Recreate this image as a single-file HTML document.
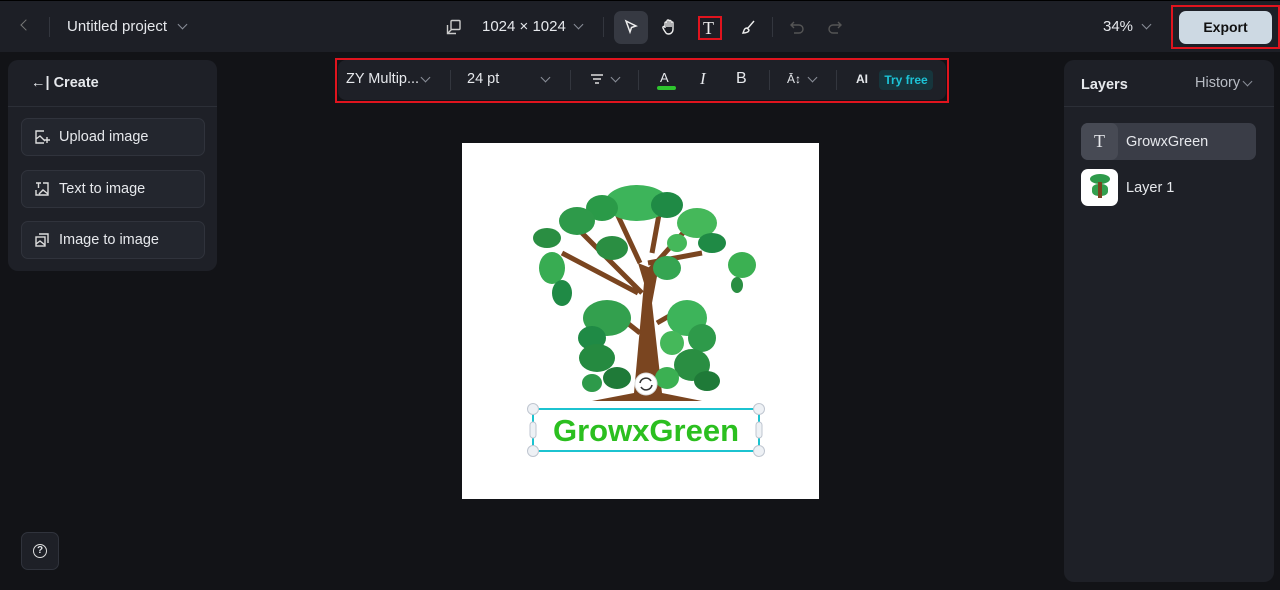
<!DOCTYPE html>
<html><head><meta charset="utf-8"><style>
*{box-sizing:border-box;margin:0;padding:0}
body{width:1280px;height:590px;background:#121317;font-family:"Liberation Sans",sans-serif;color:#e6e8ec;position:relative;overflow:hidden}
.top{position:absolute;left:0;top:0;width:1280px;height:52px;background:#1d1f26;border-top:1px solid #000}
.abs{position:absolute}
.panel{position:absolute;background:#1e2027;border-radius:10px}
.btn{position:absolute;left:21px;width:184px;height:38px;border:1px solid #30333c;background:#23262e;border-radius:7px;font-size:14.5px;line-height:36px;padding-left:37px}
.btn svg{position:absolute;left:12px;top:10px}
.red{position:absolute;border:2px solid #e0141e}
.chev{display:inline-block;width:7px;height:7px;border-right:1.3px solid #8a8e98;border-bottom:1.3px solid #8a8e98;transform:rotate(45deg);position:absolute}
</style></head><body>
<div class="top">
 <div class="abs" style="left:22px;top:20px;width:8px;height:8px;border-left:1.5px solid #777;border-bottom:1.5px solid #777;transform:rotate(45deg)"></div>
 <div class="abs" style="left:49px;top:16px;width:1px;height:20px;background:#33363e"></div>
 <div class="abs" style="left:67px;top:17px;font-size:15px">Untitled project</div>
 <span class="chev" style="left:179px;top:20px"></span>
 <svg class="abs" style="left:446px;top:18px" width="16" height="16" viewBox="0 0 16 16" fill="none" stroke="#ccc" stroke-width="1.4"><rect x="5" y="1.5" width="9" height="9" rx="1"/><path d="M1.5 6v8.5H10M1.5 14.5l4-4"/></svg>
 <div class="abs" style="left:482px;top:17px;font-size:15px">1024 × 1024</div>
 <span class="chev" style="left:575px;top:20px"></span>
 <div class="abs" style="left:603px;top:16px;width:1px;height:20px;background:#33363e"></div>
 <div class="abs" style="left:614px;top:10px;width:34px;height:33px;background:#363942;border-radius:7px"></div>
 <svg class="abs" style="left:623px;top:18px" width="16" height="16" viewBox="0 0 16 16" fill="none" stroke="#eee" stroke-width="1.5"><path d="M3 2l10 5-4.5 1.5L7 13z"/></svg>
 <svg class="abs" style="left:661px;top:17px" width="17" height="18" viewBox="0 0 17 18" fill="none" stroke="#eee" stroke-width="1.4"><path d="M4 10V5a1 1 0 012 0v4V3a1 1 0 012 0v6V3.5a1 1 0 012 0V9V5a1 1 0 012 0v6c0 3-2 5-4.5 5S5 15 3 12l-1-2a1 1 0 012-1z"/></svg>
 <div class="red" style="left:698px;top:15px;width:24px;height:24px"></div>
 <div class="abs" style="left:703px;top:17px;font-size:18px;font-family:'Liberation Serif',serif;color:#eee">T</div>
 <svg class="abs" style="left:740px;top:18px" width="16" height="16" viewBox="0 0 16 16" fill="none" stroke="#eee" stroke-width="1.4"><path d="M14 2L8 9M7 9c-3 0-3 3-4 5 3 0 6-1 6-3z"/></svg>
 <div class="abs" style="left:772px;top:16px;width:1px;height:20px;background:#33363e"></div>
 <svg class="abs" style="left:789px;top:18px" width="16" height="16" viewBox="0 0 16 16" fill="none" stroke="#555" stroke-width="1.4"><path d="M5 3L2 6l3 3M2 6h8a4 4 0 010 8H5"/></svg>
 <svg class="abs" style="left:827px;top:18px" width="16" height="16" viewBox="0 0 16 16" fill="none" stroke="#555" stroke-width="1.4"><path d="M11 3l3 3-3 3M14 6H6a4 4 0 000 8h5"/></svg>
 <div class="abs" style="left:1103px;top:17px;font-size:15px">34%</div>
 <span class="chev" style="left:1143px;top:20px"></span>
 <div class="red" style="left:1171px;top:4px;width:109px;height:44px"></div>
 <div class="abs" style="left:1179px;top:10px;width:93px;height:33px;background:#cdd9e3;border-radius:7px;color:#111;font-weight:bold;font-size:14px;text-align:center;line-height:33px">Export</div>
</div>

<div class="panel" style="left:8px;top:60px;width:209px;height:211px">
 <div class="abs" style="left:23px;top:15px;font-size:14.5px;font-weight:bold">←| Create</div>
 <div class="abs" style="left:0;top:46px;width:209px;height:1px;background:#2c2f37"></div>
</div>
<div class="btn" style="top:118px"><svg width="16" height="16" viewBox="0 0 16 16" fill="none" stroke="#ddd" stroke-width="1.4"><path d="M10 2H2v12h8M2 10l4-3 5 5M13 8v6M10 11h6"/></svg>Upload image</div>
<div class="btn" style="top:170px"><svg width="16" height="16" viewBox="0 0 16 16" fill="none" stroke="#ddd" stroke-width="1.4"><path d="M2 2h5M4.5 2v5M9 2h5v12H2V9M5 13l4-4 5 4"/></svg>Text to image</div>
<div class="btn" style="top:221px"><svg width="16" height="16" viewBox="0 0 16 16" fill="none" stroke="#ddd" stroke-width="1.4"><rect x="2" y="5" width="9" height="9"/><path d="M5 2h9v9M2 12l4-3 5 4"/></svg>Image to image</div>
<div class="abs" style="left:21px;top:532px;width:38px;height:38px;border:1px solid #30333c;background:#1e2027;border-radius:7px"></div>
<div class="abs" style="left:33px;top:544px;width:14px;height:14px;border:1.4px solid #ddd;border-radius:50%;font-size:10px;text-align:center;line-height:12px;font-weight:bold">?</div>

<div class="red" style="left:335px;top:58px;width:614px;height:45px"></div>
<div class="abs" style="left:338px;top:60px;width:608px;height:40px;background:#1e2027;border-radius:8px"></div>
<div class="abs" style="left:346px;top:71px;font-size:14.5px">ZY Multip...</div>
<span class="chev" style="left:422px;top:74px"></span>
<div class="abs" style="left:450px;top:70px;width:1px;height:20px;background:#33363e"></div>
<div class="abs" style="left:467px;top:71px;font-size:14.5px">24 pt</div>
<span class="chev" style="left:542px;top:74px"></span>
<div class="abs" style="left:570px;top:70px;width:1px;height:20px;background:#33363e"></div>
<svg class="abs" style="left:590px;top:73px" width="14" height="12" viewBox="0 0 14 12" stroke="#ddd" stroke-width="1.4"><path d="M1 2h12M3 6h8M5 10h4"/></svg>
<span class="chev" style="left:612px;top:74px"></span>
<div class="abs" style="left:638px;top:70px;width:1px;height:20px;background:#33363e"></div>
<div class="abs" style="left:660px;top:70px;font-size:13px">A</div>
<div class="abs" style="left:657px;top:86px;width:19px;height:4px;background:#2ec42e;border-radius:2px"></div>
<div class="abs" style="left:700px;top:69px;font-size:17px;font-style:italic;font-family:'Liberation Serif',serif">I</div>
<div class="abs" style="left:736px;top:70px;font-size:16px">B</div>
<div class="abs" style="left:769px;top:70px;width:1px;height:20px;background:#33363e"></div>
<div class="abs" style="left:787px;top:72px;font-size:12px">Ā↕</div>
<span class="chev" style="left:809px;top:74px"></span>
<div class="abs" style="left:836px;top:70px;width:1px;height:20px;background:#33363e"></div>
<div class="abs" style="left:856px;top:72px;font-size:12px;font-weight:bold">AI</div>
<div class="abs" style="left:879px;top:70px;width:54px;height:20px;background:#16353c;border-radius:4px;color:#1cc3d6;font-size:12px;font-weight:bold;text-align:center;line-height:20px">Try free</div>

<div class="abs" style="left:462px;top:143px;width:357px;height:356px;background:#fff"></div>
<svg class="abs" style="left:462px;top:143px" width="357" height="356" viewBox="0 0 357 356">
 <path d="M130 258L172 250L182 140L176 120L196 128L190 160L200 250L240 258z" fill="#7a4520"/>
 <path d="M180 150L120 90M185 130L230 80M178 190L140 160M195 180L230 160M178 120L150 60M190 110L200 55M176 150L100 110M186 120L240 110" stroke="#7a4520" stroke-width="5" fill="none"/>
 <g>
 <ellipse cx="175" cy="60" rx="32" ry="18" fill="#3db45a"/><ellipse cx="140" cy="65" rx="16" ry="13" fill="#2a9a48"/><ellipse cx="205" cy="62" rx="16" ry="13" fill="#1f8a45"/>
 <ellipse cx="115" cy="78" rx="18" ry="14" fill="#2e9a4a"/><ellipse cx="235" cy="80" rx="20" ry="15" fill="#45b85a"/><ellipse cx="250" cy="100" rx="14" ry="10" fill="#1f8a45"/>
 <ellipse cx="85" cy="95" rx="14" ry="10" fill="#2a8e42"/><ellipse cx="90" cy="125" rx="13" ry="16" fill="#38ac52"/><ellipse cx="100" cy="150" rx="10" ry="13" fill="#1f8a45"/>
 <ellipse cx="280" cy="122" rx="14" ry="13" fill="#3bb052"/><ellipse cx="275" cy="142" rx="6" ry="8" fill="#2a8e42"/>
 <ellipse cx="150" cy="105" rx="16" ry="12" fill="#2a8e42"/><ellipse cx="205" cy="125" rx="14" ry="12" fill="#35a552"/><ellipse cx="215" cy="100" rx="10" ry="9" fill="#45b85a"/>
 <ellipse cx="145" cy="175" rx="24" ry="18" fill="#33a04e"/><ellipse cx="130" cy="195" rx="14" ry="12" fill="#1f8a45"/>
 <ellipse cx="225" cy="175" rx="20" ry="18" fill="#3db45a"/><ellipse cx="240" cy="195" rx="14" ry="14" fill="#2e9a4a"/><ellipse cx="210" cy="200" rx="12" ry="12" fill="#45b85a"/>
 <ellipse cx="135" cy="215" rx="18" ry="14" fill="#258a40"/><ellipse cx="230" cy="222" rx="18" ry="16" fill="#2a8e42"/><ellipse cx="245" cy="238" rx="13" ry="10" fill="#1f7a38"/>
 <ellipse cx="205" cy="235" rx="12" ry="11" fill="#3bb052"/><ellipse cx="155" cy="235" rx="14" ry="11" fill="#1f7a38"/><ellipse cx="130" cy="240" rx="10" ry="9" fill="#2e9a4a"/>
 </g>
 <circle cx="184" cy="241" r="11" fill="#fff" stroke="#ddd"/>
 <path d="M178 240a6 6 0 0111-2M190 242a6 6 0 01-11 2" stroke="#333" stroke-width="1.6" fill="none"/>
 <rect x="71" y="266" width="226" height="42" fill="none" stroke="#1cc3d0" stroke-width="2"/>
 <text x="184" y="298" text-anchor="middle" font-family="Liberation Sans,sans-serif" font-weight="bold" font-size="31" fill="#2bbf1f">GrowxGreen</text>
 <g fill="#eef1f5" stroke="#bfc6d0"><circle cx="71" cy="266" r="5.5"/><circle cx="297" cy="266" r="5.5"/><circle cx="71" cy="308" r="5.5"/><circle cx="297" cy="308" r="5.5"/><rect x="68" y="279" width="6" height="16" rx="3"/><rect x="294" y="279" width="6" height="16" rx="3"/></g>
</svg>

<div class="panel" style="left:1064px;top:60px;width:210px;height:522px">
 <div class="abs" style="left:17px;top:17px;font-size:14.5px;font-weight:bold">Layers</div>
 <div class="abs" style="left:131px;top:15px;font-size:14.5px;color:#b8bcc4">History</div>
 <span class="chev" style="left:180px;top:18px"></span>
 <div class="abs" style="left:0;top:46px;width:210px;height:1px;background:#2c2f37"></div>
 <div class="abs" style="left:17px;top:63px;width:175px;height:37px;background:#3a3d47;border-radius:7px"></div>
 <div class="abs" style="left:17px;top:63px;width:37px;height:37px;background:#474a54;border-radius:7px;text-align:center;line-height:37px;font-family:'Liberation Serif',serif;font-size:18px">T</div>
 <div class="abs" style="left:62px;top:74px;font-size:14.5px">GrowxGreen</div>
 <div class="abs" style="left:17px;top:109px;width:37px;height:37px;background:#fff;border-radius:7px"></div>
 <div class="abs" style="left:26px;top:114px;width:20px;height:10px;background:#2e9a4a;border-radius:50%"></div>
 <div class="abs" style="left:28px;top:124px;width:16px;height:12px;background:#33a04e;border-radius:40%"></div>
 <div class="abs" style="left:34px;top:122px;width:4px;height:16px;background:#7a4520"></div>
 <div class="abs" style="left:62px;top:120px;font-size:14.5px">Layer 1</div>
</div>
</body></html>
